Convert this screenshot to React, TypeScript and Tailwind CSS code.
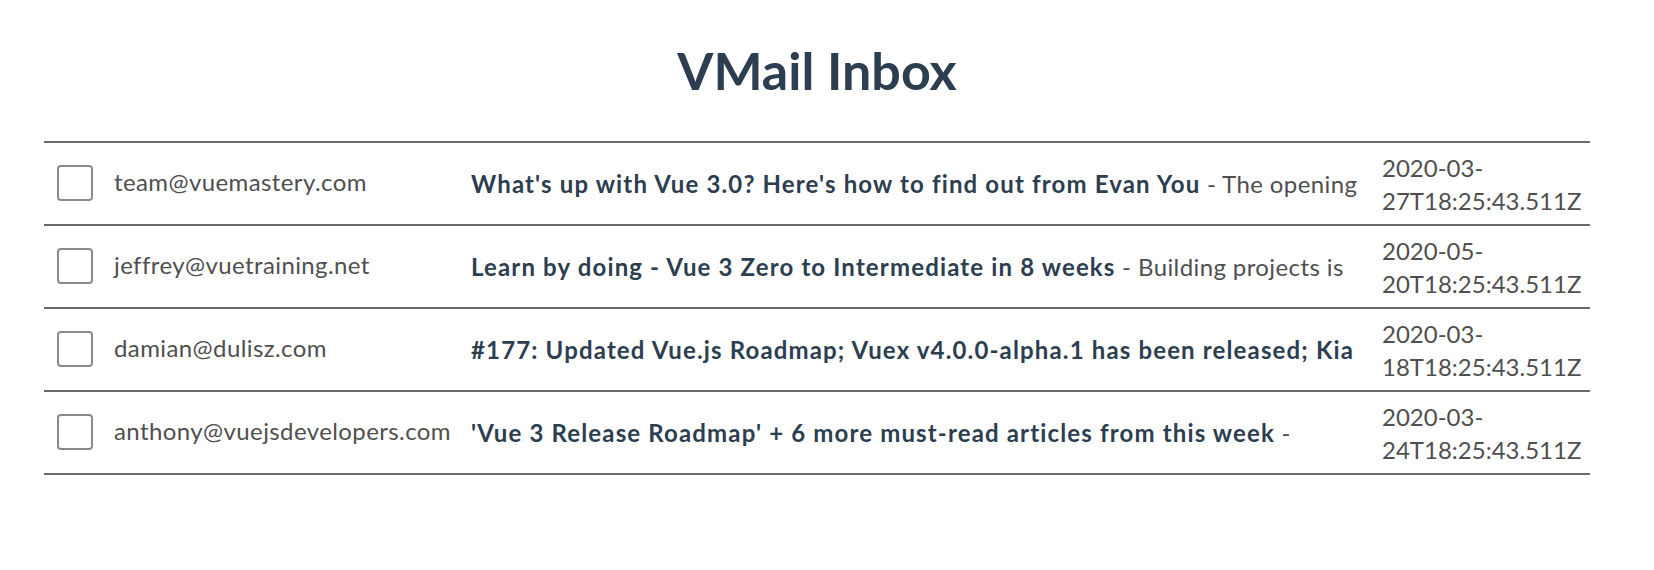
import React from 'react'

const emails = [
  {
    from: 'team@vuemastery.com',
    subject: "What's up with Vue 3.0? Here's how to find out from Evan You",
    preview: ' - The opening',
    sentAt: '2020-03-27T18:25:43.511Z',
  },
  {
    from: 'jeffrey@vuetraining.net',
    subject: 'Learn by doing - Vue 3 Zero to Intermediate in 8 weeks',
    preview: ' - Building projects is',
    sentAt: '2020-05-20T18:25:43.511Z',
  },
  {
    from: 'damian@dulisz.com',
    subject: '#177: Updated Vue.js Roadmap; Vuex v4.0.0-alpha.1 has been released; Kia',
    preview: '',
    sentAt: '2020-03-18T18:25:43.511Z',
  },
  {
    from: 'anthony@vuejsdevelopers.com',
    subject: "'Vue 3 Release Roadmap' + 6 more must-read articles from this week",
    preview: ' -',
    sentAt: '2020-03-24T18:25:43.511Z',
  },
]

export default function App() {
  return (
    <div className="min-h-[570px] bg-white pl-[44px] pr-[64px] pt-[38px] text-[#2c3e50] font-['Lato',sans-serif]">
      <h1 className="text-center text-[52px] font-bold leading-[64px]">VMail Inbox</h1>

      <div className="mt-[39px] border-t-2 border-[#6b6b6b]">
        {emails.map((email, index) => (
          <div key={index} className="flex h-[83px] items-center border-b-2 border-[#6b6b6b] text-[24px] leading-[33px]">
            <div className="w-[70px] shrink-0 pb-[2px] pl-[13px]">
              <div className="h-[36px] w-[36px] rounded-[4px] border-2 border-[#8a8a8a]"></div>
            </div>
            <div className="w-[357px] shrink-0 pb-[4px] tracking-[0.4px] text-[#4f4f4f]">{email.from}</div>
            <div className="w-[911px] shrink-0 overflow-hidden whitespace-nowrap">
              <span className="font-bold tracking-[1.15px]">{email.subject}</span>
              <span className="tracking-[0.4px] text-[#4f4f4f]">{email.preview}</span>
            </div>
            <div className="text-[#4f4f4f]">
              <div>{email.sentAt.slice(0, 8)}</div>
              <div>{email.sentAt.slice(8)}</div>
            </div>
          </div>
        ))}
      </div>
    </div>
  )
}
